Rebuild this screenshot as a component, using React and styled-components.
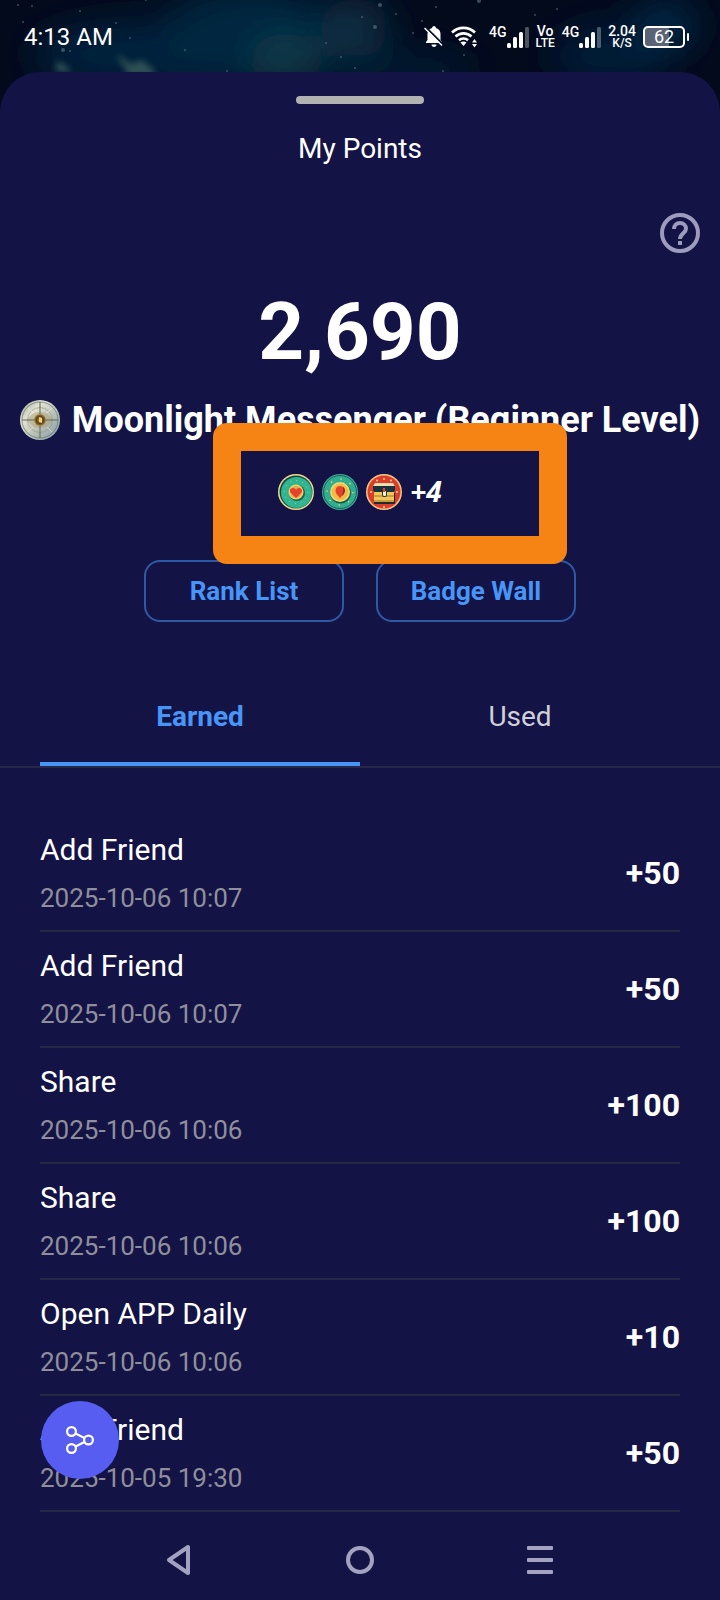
import React, { useState } from "react";
import styled, { createGlobalStyle } from "styled-components";

const points = [
  { id: 1, title: "Add Friend", date: "2025-10-06 10:07", amount: "+50" },
  { id: 2, title: "Add Friend", date: "2025-10-06 10:07", amount: "+50" },
  { id: 3, title: "Share", date: "2025-10-06 10:06", amount: "+100" },
  { id: 4, title: "Share", date: "2025-10-06 10:06", amount: "+100" },
  { id: 5, title: "Open APP Daily", date: "2025-10-06 10:06", amount: "+10" },
  { id: 6, title: "Add Friend", date: "2025-10-05 19:30", amount: "+50" },
];

const stars = [
  [18, 5, 1], [32, 6, 1], [23, 22, 1], [63, 50, 2], [70, 51, 1], [80, 11, 1],
  [116, 23, 1], [130, 38, 1], [146, 0, 1], [185, 50, 1], [380, 5, 2],
  [375, 27, 2], [396, 14, 1], [362, 17, 1], [326, 43, 1], [341, 57, 1],
  [422, 21, 1], [436, 7, 1], [479, 1, 2], [535, 15, 1], [464, 55, 1],
  [443, 71, 1], [355, 68, 1], [227, 71, 1], [557, 9, 1], [413, 33, 1],
];

function Sky() {
  return (
    <SkySvg viewBox="0 0 720 120" preserveAspectRatio="none" aria-hidden="true">
      <defs>
        <filter id="cloud" x="-50%" y="-50%" width="200%" height="200%">
          <feGaussianBlur stdDeviation="18" />
        </filter>
        <filter id="wisp" x="-50%" y="-50%" width="200%" height="200%">
          <feGaussianBlur stdDeviation="3" />
        </filter>
      </defs>
      <rect width="720" height="120" fill="#020a1c" />
      <g filter="url(#cloud)">
        <ellipse cx="150" cy="55" rx="120" ry="34" fill="#04203c" />
        <ellipse cx="250" cy="36" rx="90" ry="50" fill="#052641" />
        <ellipse cx="285" cy="60" rx="36" ry="26" fill="#0f3a4a" />
        <ellipse cx="355" cy="28" rx="34" ry="30" fill="#082e42" />
        <ellipse cx="400" cy="70" rx="80" ry="16" fill="#041c34" />
        <ellipse cx="610" cy="56" rx="60" ry="30" fill="#041e38" />
        <ellipse cx="665" cy="26" rx="32" ry="24" fill="#052c4a" />
      </g>
      <path d="M116 56l8 2 6 6 12-4 12 10 2 6h-28l-4-10z" fill="#2f5054" filter="url(#wisp)" />
      <path d="M56 62l8 2 8 8h-16z" fill="#2f5054" filter="url(#wisp)" />
      {stars.map(([x, y, r]) => (
        <circle key={`${x}-${y}`} cx={x} cy={y} r={r} fill="#6f8c98" opacity="0.5" />
      ))}
    </SkySvg>
  );
}

function MutedBell() {
  return (
    <svg width="20" height="22" viewBox="0 0 20 22" aria-hidden="true">
      <path d="M10 0C11 0 12 1 12 2C15 3 16.5 5 16.5 8V14L18 16V17H2V16L3.5 14V8C3.5 5 5 3 8 2C8 1 9 0 10 0z" fill="#fff" />
      <path d="M7.5 18.5h5c0 1.5-1 2.5-2.5 2.5s-2.5-1-2.5-2.5z" fill="#fff" />
      <path d="M2 1.5L19.5 19" stroke="#04112a" strokeWidth="2" />
      <path d="M0.5 2L18 19.5" stroke="#fff" strokeWidth="1.5" />
    </svg>
  );
}

function Wifi() {
  return (
    <svg width="31" height="22" viewBox="0 0 31 22" fill="none" aria-hidden="true">
      <g stroke="#fff" strokeWidth="2.6">
        <path d="M1 6.5C7.5 0.3 17.5 0.3 24 6.5" />
        <path d="M4.5 10.5C9 6.3 16 6.3 20.5 10.5" />
        <path d="M8 14.2c2.5-2.3 6.5-2.3 9 0" />
      </g>
      <path d="M9.5 16.5C11 15 14 15 15.5 16.5L12.5 20z" fill="#fff" />
      <path d="M21 16.5l2.5-3.5 2.5 3.5zM21 18l2.5 3.5L26 18z" fill="#fff" />
    </svg>
  );
}

function Signal() {
  return (
    <svg width="22" height="22" viewBox="0 0 22 22" aria-hidden="true">
      <rect x="0" y="17" width="4" height="5" rx="1.5" fill="#fff" />
      <rect x="6" y="11" width="4" height="11" rx="1.5" fill="#fff" />
      <rect x="12" y="6" width="4" height="16" rx="1.5" fill="#fff" />
      <rect x="18" y="1" width="4" height="21" rx="1.5" fill="#fff" opacity="0.3" />
    </svg>
  );
}

function LevelIcon() {
  return (
    <svg width="40" height="40" viewBox="0 0 40 40" aria-hidden="true">
      <defs>
        <linearGradient id="silver" x1="0" y1="0" x2="1" y2="1">
          <stop offset="0" stopColor="#8f9a8d" />
          <stop offset="0.3" stopColor="#e3e4d2" />
          <stop offset="0.6" stopColor="#b9c1b6" />
          <stop offset="1" stopColor="#8297a3" />
        </linearGradient>
        <radialGradient id="brass">
          <stop offset="0" stopColor="#c58f2d" />
          <stop offset="0.6" stopColor="#5c4216" />
          <stop offset="1" stopColor="#a98a4a" />
        </radialGradient>
      </defs>
      <circle cx="20" cy="20" r="20" fill="url(#silver)" />
      <circle cx="20" cy="20" r="18" fill="none" stroke="#647576" strokeWidth="1" opacity="0.7" />
      <circle cx="20" cy="20" r="12.5" fill="none" stroke="#88917f" strokeWidth="1" opacity="0.6" />
      <path d="M7 20c4-6 8-8 13-8s9 2 13 8c-4 6-8 8-13 8s-9-2-13-8z" fill="#ad9f77" opacity="0.5" />
      <path d="M20 2v36M2 20h36" stroke="#5b6961" strokeWidth="1" />
      <path d="M8 8l5 5M32 8l-5 5M8 32l5-5M32 32l-5-5" stroke="#f2f1dc" strokeWidth="1" opacity="0.6" />
      <circle cx="20" cy="20" r="6" fill="url(#brass)" />
      <path d="M19 17l3 1v5l-3-1z" fill="#f0cf86" />
    </svg>
  );
}

function HeartBadge() {
  return (
    <svg width="36" height="36" viewBox="0 0 36 36" aria-hidden="true">
      <circle cx="18" cy="18" r="18" fill="#f2dc8a" />
      <circle cx="18" cy="18" r="16.5" fill="#14483f" />
      <circle cx="18.5" cy="18.5" r="15.5" fill="#2fb592" />
      <circle cx="18" cy="18" r="11.5" fill="none" stroke="#d8d27a" strokeWidth="1" strokeDasharray="1 5" />
      <circle cx="19" cy="19" r="8" fill="#176251" />
      <circle cx="18" cy="18" r="7.5" fill="#f5d066" />
      <circle cx="18" cy="18" r="6" fill="#e3a848" />
      <path d="M18 24L13 19C11 17 12 14 15 14C16.5 14 17.5 15 18 16C18.5 15 19.5 14 21 14C24 14 25 17 23 19z" fill="#e8402b" />
    </svg>
  );
}

function PinBadge() {
  return (
    <svg width="36" height="36" viewBox="0 0 36 36" aria-hidden="true">
      <circle cx="18" cy="18" r="18" fill="#3fa894" />
      <circle cx="18" cy="18" r="16.5" fill="none" stroke="#196458" strokeWidth="1" />
      <circle cx="18" cy="18" r="15.5" fill="#2fae90" />
      <circle cx="18" cy="18" r="13" fill="none" stroke="#dcd678" strokeWidth="1.5" strokeDasharray="1.5 8.7" />
      <circle cx="18.5" cy="19" r="10.5" fill="#155a4e" />
      <circle cx="18" cy="18" r="10" fill="#f7dc72" />
      <circle cx="18" cy="18" r="8.5" fill="#f0bd48" />
      <path d="M18 24.5c-1-2.5-4.5-4.5-4.5-8 0-2.6 2-4.5 4.5-4.5s4.5 1.9 4.5 4.5c0 3.5-3.5 5.5-4.5 8z" fill="#e5412c" />
      <path d="M18.5 24.5c1-2.5 4.5-4.5 4.5-8 0-1.5-0.8-3-2-3.8 0.8 4 0 8-2.5 11.8z" fill="#8a2a1c" />
    </svg>
  );
}

function ChestBadge() {
  return (
    <svg width="36" height="36" viewBox="0 0 36 36" aria-hidden="true">
      <circle cx="18" cy="18" r="18" fill="#f0c98a" />
      <circle cx="18" cy="18" r="16.5" fill="#dd3d28" />
      <g fill="#f8d49a">
        <circle cx="18" cy="5" r="1" />
        <circle cx="11" cy="6.5" r="1" />
        <circle cx="25" cy="6.5" r="1" />
        <circle cx="5" cy="18" r="1" />
        <circle cx="31" cy="18" r="1" />
        <circle cx="18" cy="33" r="1" />
      </g>
      <path d="M9 9h18l2 3v4l-2 3H9l-2-3v-4z" fill="#18323d" />
      <path d="M9 9h18l2 3H7z" fill="#ecdcae" />
      <rect x="8" y="19" width="21" height="11" fill="#1c2c30" />
      <rect x="8" y="18" width="20" height="10" fill="#efc65a" />
      <path d="M8 22h20M8 27h20" stroke="#a87525" strokeWidth="1" />
      <rect x="16" y="15" width="5" height="8" rx="2" fill="#26343a" />
      <rect x="17" y="17" width="3" height="5" rx="1" fill="#f3f0df" />
      <rect x="17" y="14" width="2" height="4" fill="#d6452c" />
    </svg>
  );
}

function App() {
  const [tab, setTab] = useState("earned");

  return (
    <Page>
      <GlobalStyle />
      <Sky />
      <StatusBar>
        <Time>4:13 AM</Time>
        <StatusIcons>
          <MutedBell />
          <Wifi />
          <Network>
            <NetworkType>4G</NetworkType>
            <Signal />
          </Network>
          <Stacked>
            <span>Vo</span>
            <span>LTE</span>
          </Stacked>
          <Network>
            <NetworkType>4G</NetworkType>
            <Signal />
          </Network>
          <Stacked>
            <span>2.04</span>
            <span>K/S</span>
          </Stacked>
          <Battery>62</Battery>
        </StatusIcons>
      </StatusBar>

      <Sheet>
        <Handle />
        <Title>My Points</Title>
        <HelpRow>
          <IconButton aria-label="Help">
            <svg width="40" height="40" viewBox="0 0 40 40" fill="none" aria-hidden="true">
              <circle cx="20" cy="20" r="18" stroke="#9d9cbc" strokeWidth="4" />
              <path d="M14 16C14 12.5 16.6 10 20 10S26 12.5 26 15.7C26 20 20 20.5 20 26" stroke="#9d9cbc" strokeWidth="4" />
              <path d="M18 28h4v4h-4z" fill="#9d9cbc" />
            </svg>
          </IconButton>
        </HelpRow>

        <Total>2,690</Total>
        <Level>
          <LevelIcon />
          <LevelName>Moonlight Messenger (Beginner Level)</LevelName>
        </Level>
        <Badges>
          <HeartBadge />
          <PinBadge />
          <ChestBadge />
          <More>+4</More>
          <Highlight />
        </Badges>
        <Actions>
          <OutlineButton>Rank List</OutlineButton>
          <OutlineButton>Badge Wall</OutlineButton>
        </Actions>

        <Tabs role="tablist">
          <Tab role="tab" aria-selected={tab === "earned"} $active={tab === "earned"} onClick={() => setTab("earned")}>
            Earned
          </Tab>
          <Tab role="tab" aria-selected={tab === "used"} $active={tab === "used"} onClick={() => setTab("used")}>
            Used
          </Tab>
        </Tabs>

        <List>
          {tab === "earned" &&
            points.map((item) => (
              <Item key={item.id}>
                <ItemInfo>
                  <ItemTitle>{item.title}</ItemTitle>
                  <ItemDate>{item.date}</ItemDate>
                </ItemInfo>
                <Amount>{item.amount}</Amount>
              </Item>
            ))}
        </List>

        <NavBar>
          <IconButton aria-label="Back">
            <svg width="32" height="32" viewBox="0 0 32 32" fill="none" aria-hidden="true">
              <path d="M24 3v26L5 16z" stroke="#a3a2c0" strokeWidth="4" strokeLinejoin="round" />
            </svg>
          </IconButton>
          <IconButton aria-label="Home">
            <svg width="32" height="32" viewBox="0 0 32 32" fill="none" aria-hidden="true">
              <circle cx="16" cy="16" r="12" stroke="#a3a2c0" strokeWidth="4" />
            </svg>
          </IconButton>
          <IconButton aria-label="Recent apps">
            <svg width="32" height="32" viewBox="0 0 32 32" fill="#a3a2c0" aria-hidden="true">
              <rect x="3" y="2" width="26" height="4" rx="1" />
              <rect x="3" y="14" width="26" height="4" rx="1" />
              <rect x="3" y="26" width="26" height="4" rx="1" />
            </svg>
          </IconButton>
        </NavBar>
      </Sheet>

      <ShareButton aria-label="Share">
        <svg width="28" height="28" viewBox="0 0 28 28" fill="none" stroke="#fff" strokeWidth="2.2" aria-hidden="true">
          <circle cx="5.5" cy="5.5" r="4.4" />
          <circle cx="5.5" cy="22.5" r="4.4" />
          <circle cx="22.5" cy="14" r="4.4" />
          <path d="M9.5 7.5l9 4.5M9.5 20.5l9-4.5" />
        </svg>
      </ShareButton>
    </Page>
  );
}

const GlobalStyle = createGlobalStyle`
  * {
    box-sizing: border-box;
  }
  body {
    margin: 0;
    background: #141345;
    color: white;
    font-family: Roboto, "Liberation Sans", sans-serif;
  }
  button {
    padding: 0;
    border: none;
    background: none;
    font-family: inherit;
  }
  svg {
    display: block;
    flex-shrink: 0;
  }
`;

const Page = styled.div`
  position: relative;
  min-height: 100vh;
  display: flex;
  flex-direction: column;
`;

const SkySvg = styled.svg`
  position: absolute;
  top: 0;
  left: 0;
  width: 100%;
  height: 120px;
`;

const StatusBar = styled.header`
  position: relative;
  display: flex;
  justify-content: space-between;
  align-items: center;
  height: 72px;
  padding: 2px 35px 0 24px;
`;

const Time = styled.span`
  font-size: 24px;
  line-height: 32px;
`;

const StatusIcons = styled.div`
  display: flex;
  align-items: center;
  gap: 7px;
`;

const Network = styled.div`
  display: flex;
  align-items: flex-start;
`;

const NetworkType = styled.span`
  font-size: 14px;
  line-height: 12px;
  font-weight: 500;
`;

const Stacked = styled.div`
  display: flex;
  flex-direction: column;
  align-items: center;
  font-size: 12px;
  line-height: 12px;
  font-weight: 500;

  span:first-child {
    font-size: 14px;
  }
`;

const Battery = styled.div`
  position: relative;
  width: 42px;
  border: 2px solid white;
  border-radius: 5px;
  background: linear-gradient(90deg, #5b6475 62%, transparent 62%);
  font-size: 18px;
  line-height: 18px;
  text-align: center;

  &::after {
    content: "";
    position: absolute;
    top: 5px;
    right: -6px;
    width: 2px;
    height: 8px;
    border-radius: 1px;
    background: white;
  }
`;

const Sheet = styled.main`
  position: relative;
  flex: 1;
  display: flex;
  flex-direction: column;
  padding-top: 24px;
  border-radius: 40px 40px 0 0;
  background: #141345;
`;

const Handle = styled.div`
  align-self: center;
  width: 128px;
  height: 8px;
  border-radius: 4px;
  background: #b2b2b2;
`;

const Title = styled.h1`
  margin: 28px 0 0;
  font-size: 28px;
  line-height: 34px;
  font-weight: 400;
  text-align: center;
`;

const HelpRow = styled.div`
  display: flex;
  justify-content: flex-end;
  padding: 47px 20px 0;
`;

const IconButton = styled.button`
  display: flex;
`;

const Total = styled.div`
  margin-top: 31px;
  font-size: 80px;
  line-height: 96px;
  font-weight: 700;
  text-align: center;
`;

const Level = styled.div`
  display: flex;
  justify-content: center;
  align-items: center;
  gap: 12px;
  margin-top: 20px;
`;

const LevelName = styled.h2`
  margin: 0;
  font-size: 36px;
  line-height: 40px;
  font-weight: 700;
  white-space: nowrap;
`;

const Badges = styled.div`
  position: relative;
  display: flex;
  justify-content: center;
  align-items: center;
  align-self: center;
  gap: 8px;
  margin-top: 34px;
`;

const More = styled.span`
  padding-bottom: 2px;
  font-family: "Noto Sans", "Open Sans", sans-serif;
  font-size: 28px;
  line-height: 34px;
  font-weight: 700;
  font-style: italic;
`;

const Highlight = styled.div`
  position: absolute;
  inset: -51px -125px -54px -65px;
  border: 28px solid #f58414;
  border-radius: 14px;
  pointer-events: none;
`;

const Actions = styled.div`
  display: flex;
  justify-content: center;
  gap: 32px;
  margin-top: 50px;
`;

const OutlineButton = styled.button`
  width: 200px;
  height: 62px;
  border: 2px solid #2e5aa5;
  border-radius: 16px;
  color: #4796f7;
  font-size: 26px;
  font-weight: 700;
`;

const Tabs = styled.div`
  display: flex;
  margin-top: 46px;
  padding: 0 40px;
  border-bottom: 2px solid #272845;
`;

const Tab = styled.button`
  flex: 1;
  height: 98px;
  padding-top: 2px;
  border-bottom: 4px solid ${({ $active }) => ($active ? "#4796f7" : "transparent")};
  color: ${({ $active }) => ($active ? "#4796f7" : "#d0d0da")};
  font-size: 28px;
  font-weight: ${({ $active }) => ($active ? 700 : 400)};
`;

const List = styled.ul`
  flex: 1;
  margin: 0;
  padding: 48px 40px 0;
  list-style: none;
`;

const Item = styled.li`
  display: flex;
  justify-content: space-between;
  align-items: center;
  height: 116px;
  border-bottom: 2px solid #272845;
`;

const ItemInfo = styled.div`
  padding-top: 2px;
`;

const ItemTitle = styled.div`
  font-size: 30px;
  line-height: 36px;
`;

const ItemDate = styled.div`
  margin-top: 12px;
  color: #8f8f9c;
  font-size: 26px;
  line-height: 36px;
`;

const Amount = styled.div`
  font-size: 32px;
  font-weight: 700;
`;

const NavBar = styled.nav`
  display: flex;
  justify-content: space-around;
  align-items: center;
  height: 88px;
  padding: 8px 90px 0;
`;

const ShareButton = styled.button`
  position: absolute;
  left: 41px;
  bottom: 121px;
  display: flex;
  justify-content: center;
  align-items: center;
  width: 78px;
  height: 78px;
  border-radius: 50%;
  background: #575df0;
`;

export default App;
